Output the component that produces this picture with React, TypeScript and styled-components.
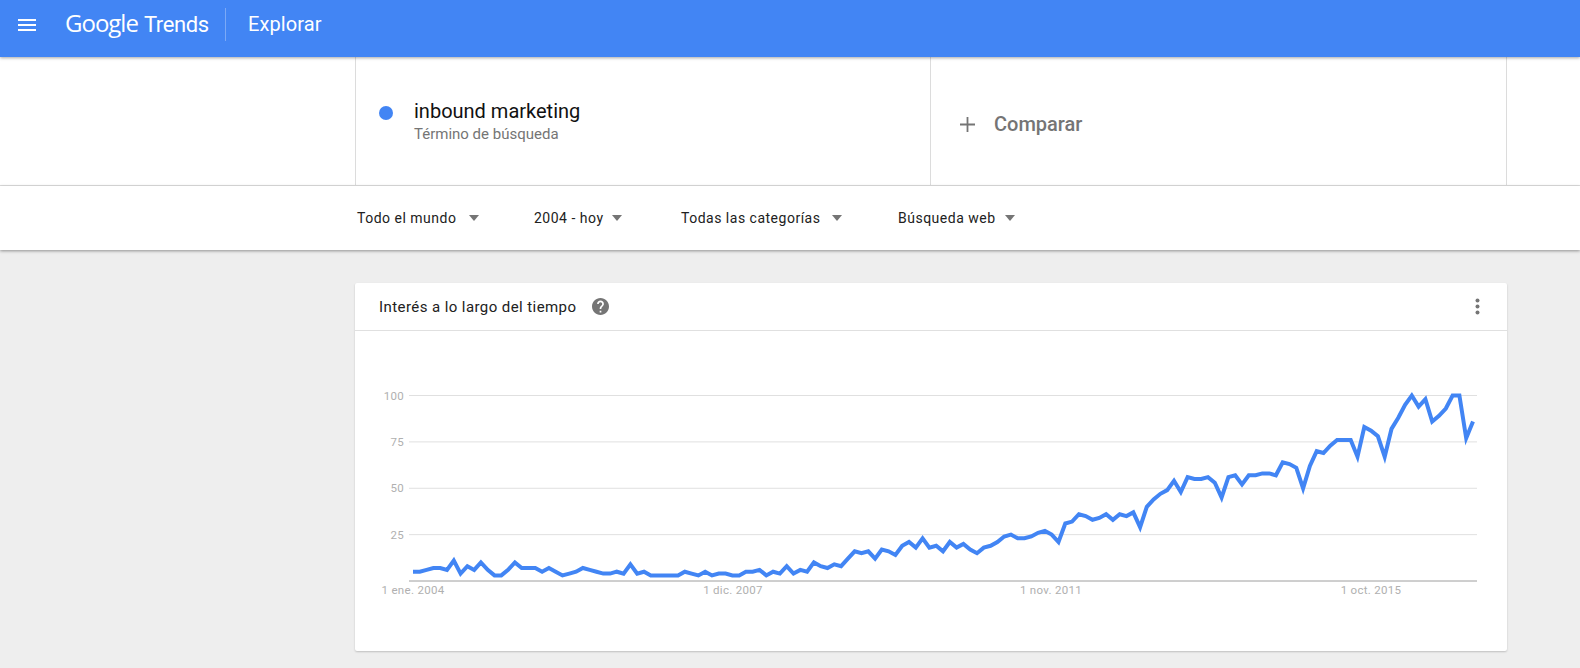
import React from 'react';
import styled, { createGlobalStyle } from 'styled-components';

const GlobalStyle = createGlobalStyle`
  html, body {
    margin: 0;
    padding: 0;
    height: 100%;
    overflow: hidden;
    background-color: #eeeeee;
    font-family: Roboto, "Liberation Sans", sans-serif;
  }
`;

const HeaderBar = styled.header`
  display: flex;
  align-items: center;
  height: 57px;
  padding-left: 18px;
  background-color: #4285f4;
  color: #ffffff;
  position: relative;
  z-index: 3;
  box-shadow: 0 1px 3px rgba(0, 0, 0, 0.35);
`;

const MenuIcon = styled.svg`
  display: block;
  width: 18px;
  height: 12px;
  margin-right: 30px;
  margin-top: -8px;
`;

const Logo = styled.div`
  display: flex;
  align-items: baseline;
  margin-top: -13px;
  margin-left: -1px;
  width: 160px;
`;

const LogoGoogle = styled.span`
  font-family: "Open Sans", sans-serif;
  font-size: 24px;
  letter-spacing: -1px;
  margin-right: 6px;
`;

const LogoTrends = styled.span`
  font-size: 22px;
  font-weight: 400;
  letter-spacing: -0.4px;
`;

const HeaderDivider = styled.div`
  width: 1px;
  height: 33px;
  margin-top: -8px;
  background-color: rgba(255, 255, 255, 0.3);
  margin-right: 22px;
`;

const PageTitle = styled.div`
  font-size: 20px;
  margin-top: -10px;
  letter-spacing: 0.1px;
`;

const SearchRow = styled.div`
  display: grid;
  grid-template-columns: 575px 577px;
  height: 128px;
  padding-left: 355px;
  background-color: #ffffff;
  border-bottom: 1px solid #e0e0e0;
`;

const TermCell = styled.div`
  display: flex;
  align-items: center;
  border-left: 1px solid #dcdcdc;
  padding: 0 0 0 23px;
`;

const ComparCell = styled.div`
  display: flex;
  align-items: center;
  border-left: 1px solid #dcdcdc;
  border-right: 1px solid #dcdcdc;
  padding: 6px 0 0 29px;
  color: #757575;
`;

const TermDot = styled.span`
  width: 14px;
  height: 14px;
  border-radius: 50%;
  background-color: #4285f4;
  margin-right: 21px;
  margin-top: -17px;
`;

const TermName = styled.div`
  font-size: 20px;
  line-height: 24px;
  color: #111111;
`;

const TermKind = styled.div`
  font-size: 15px;
  line-height: 20px;
  margin-top: 1px;
  color: #757575;
`;

const PlusIcon = styled.svg`
  display: block;
  width: 15px;
  height: 15px;
  margin-right: 19px;
`;

const ComparLabel = styled.span`
  font-size: 20px;
  font-weight: 500;
`;

const FilterRow = styled.div`
  display: flex;
  align-items: center;
  height: 64px;
  padding: 0 0 0 357px;
  box-sizing: border-box;
  background-color: #ffffff;
  position: relative;
  z-index: 2;
  box-shadow: 0 1px 3px rgba(0, 0, 0, 0.4);
`;

const Filter = styled.div<{ $gap: number; $width: number }>`
  display: flex;
  align-items: center;
  width: ${props => props.$width}px;
  font-size: 14px;
  letter-spacing: 0.5px;
  color: #212121;

  &::after {
    content: '';
    margin-left: ${props => props.$gap}px;
    border-left: 5.5px solid transparent;
    border-right: 5.5px solid transparent;
    border-top: 6px solid #757575;
  }
`;

const Content = styled.main`
  padding: 33px 0 0 355px;
`;

const Card = styled.section`
  width: 1152px;
  height: 368px;
  border-radius: 2px;
  background-color: #ffffff;
  box-shadow: 0 1px 2px rgba(0, 0, 0, 0.2);
`;

const CardHeader = styled.div`
  display: flex;
  align-items: center;
  height: 47px;
  padding: 0 27px 0 24px;
  border-bottom: 1px solid #e0e0e0;
`;

const CardTitle = styled.h2`
  margin: 0 16px 0 0;
  font-size: 15px;
  font-weight: 400;
  letter-spacing: 0.42px;
  color: #212121;
`;

const HelpIcon = styled.svg`
  display: block;
  width: 17px;
  height: 17px;
`;

const MoreIcon = styled.svg`
  display: block;
  width: 5px;
  height: 17px;
  margin-left: auto;
`;

const ChartSvg = styled.svg`
  display: block;
  width: 1152px;
  height: 320px;
`;

const AxisLabel = styled.text`
  font-family: Roboto, "Liberation Sans", sans-serif;
  font-size: 11.5px;
  letter-spacing: 0.3px;
  fill: #b0b0b0;
`;

const TERM_VALUES = [
  5, 5, 6, 7, 7, 6, 11, 4, 8, 6, 10, 6, 3, 3, 6, 10, 7, 7, 7, 5, 7, 5, 3, 4, 5, 7, 6, 5, 4, 4, 5, 4, 9, 4, 5, 3,
  3, 3, 3, 3, 5, 4, 3, 5, 3, 4, 4, 3, 3, 5, 5, 6, 3, 5, 4, 8, 4, 6, 5, 10, 8, 7, 9, 8, 12, 16, 15, 16, 12, 17, 16,
  14, 19, 21, 18, 23, 18, 19, 16, 21, 18, 20, 17, 15, 18, 19, 21, 24, 25, 23, 23, 24, 26, 27, 25, 21, 31, 32, 36,
  35, 33, 34, 36, 33, 36, 35, 37, 29, 40, 44, 47, 49, 54, 48, 56, 55, 55, 56, 53, 45, 56, 57, 52, 57, 57, 58, 58,
  57, 64, 63, 61, 50, 62, 70, 69, 73, 76, 76, 76, 67, 83, 81, 78, 67, 82, 88, 95, 100, 94, 98, 86, 89, 93, 100,
  100, 77, 86,
];

// chart coordinates are relative to the svg, which starts at the card's left edge and y=331
const CHART_LEFT = 54;
const CHART_RIGHT = 1122;
const LINE_LEFT = 58;
const LINE_RIGHT = 1118;
const BASELINE = 250;
const UNIT = 1.855;

const toY = (value: number) => BASELINE - value * UNIT;

const TICKS = [100, 75, 50, 25];

const DATES = [
  { label: '1 ene. 2004', x: 58 },
  { label: '1 dic. 2007', x: 378 },
  { label: '1 nov. 2011', x: 696 },
  { label: '1 oct. 2015', x: 1016 },
];

const linePoints = TERM_VALUES.map((value, i) => {
  const x = LINE_LEFT + (i * (LINE_RIGHT - LINE_LEFT)) / (TERM_VALUES.length - 1);
  return `${x.toFixed(1)},${toY(value).toFixed(1)}`;
}).join(' ');

const App: React.FC = () => {
  return (
    <>
      <GlobalStyle />
      <HeaderBar>
        <MenuIcon viewBox="0 0 18 12">
          <path d="M0 0h18v2H0zM0 5h18v2H0zM0 10h18v2H0z" fill="#ffffff" />
        </MenuIcon>
        <Logo>
          <LogoGoogle>Google</LogoGoogle>
          <LogoTrends>Trends</LogoTrends>
        </Logo>
        <HeaderDivider />
        <PageTitle>Explorar</PageTitle>
      </HeaderBar>

      <SearchRow>
        <TermCell>
          <TermDot />
          <div>
            <TermName>inbound marketing</TermName>
            <TermKind>Término de búsqueda</TermKind>
          </div>
        </TermCell>
        <ComparCell>
          <PlusIcon viewBox="0 0 15 15">
            <path d="M6.6 0h1.8v6.6H15v1.8H8.4V15H6.6V8.4H0V6.6h6.6z" fill="#757575" />
          </PlusIcon>
          <ComparLabel>Comparar</ComparLabel>
        </ComparCell>
      </SearchRow>

      <FilterRow>
        <Filter $width={177} $gap={13}>Todo el mundo</Filter>
        <Filter $width={147} $gap={8}>2004 - hoy</Filter>
        <Filter $width={217} $gap={12}>Todas las categorías</Filter>
        <Filter $width={130} $gap={9}>Búsqueda web</Filter>
      </FilterRow>

      <Content>
        <Card>
          <CardHeader>
            <CardTitle>Interés a lo largo del tiempo</CardTitle>
            <HelpIcon viewBox="2 2 20 20">
              <path
                d="M12 2C6.48 2 2 6.48 2 12s4.48 10 10 10 10-4.48 10-10S17.52 2 12 2zm1 17h-2v-2h2v2zm2.07-7.75l-.9.92C13.45 12.9 13 13.5 13 15h-2v-.5c0-1.1.45-2.1 1.17-2.83l1.24-1.26c.37-.36.59-.86.59-1.41 0-1.1-.9-2-2-2s-2 .9-2 2H8c0-2.21 1.79-4 4-4s4 1.79 4 4c0 .88-.36 1.68-.93 2.25z"
                fill="#757575"
              />
            </HelpIcon>
            <MoreIcon viewBox="0 0 5 17">
              <circle cx="2.5" cy="2.5" r="2" fill="#757575" />
              <circle cx="2.5" cy="8.5" r="2" fill="#757575" />
              <circle cx="2.5" cy="14.5" r="2" fill="#757575" />
            </MoreIcon>
          </CardHeader>
          <ChartSvg viewBox="0 0 1152 320">
            {TICKS.map(tick => (
              <g key={tick}>
                <line
                  x1={CHART_LEFT}
                  x2={CHART_RIGHT}
                  y1={toY(tick)}
                  y2={toY(tick)}
                  stroke="#e0e0e0"
                  strokeWidth={1}
                />
                <AxisLabel x={49} y={toY(tick) + 4} textAnchor="end">
                  {tick}
                </AxisLabel>
              </g>
            ))}
            <line
              x1={CHART_LEFT}
              x2={CHART_RIGHT}
              y1={BASELINE}
              y2={BASELINE}
              stroke="#9e9e9e"
              strokeWidth={1}
            />
            {DATES.map(date => (
              <AxisLabel key={date.label} x={date.x} y={263} textAnchor="middle">
                {date.label}
              </AxisLabel>
            ))}
            <polyline
              points={linePoints}
              fill="none"
              stroke="#4285f4"
              strokeWidth={4}
              strokeLinejoin="miter"
            />
          </ChartSvg>
        </Card>
      </Content>
    </>
  );
};

export default App;
